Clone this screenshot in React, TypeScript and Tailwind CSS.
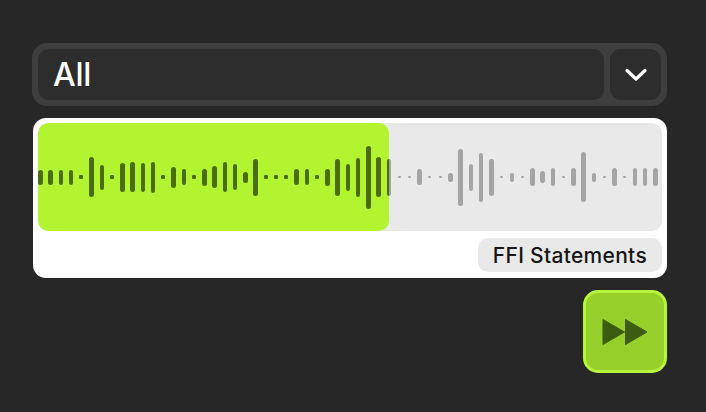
import React from 'react';

const heights = [
  15, 15, 15, 15, 0, 40, 25, 0, 29, 30, 29, 31, 0, 21, 16, 0, 17, 22, 30, 26, 11, 37, 0, 0, 0, 16, 16, 0, 17, 37, 27,
  39, 63, 40, 37, 0, 0, 16, 0, 0, 9, 57, 27, 49, 37, 0, 9, 0, 18, 12, 18, 0, 18, 50, 9, 0, 18, 0, 18, 18, 18,
];

const Wave: React.FC<{ dark?: boolean }> = ({ dark }) => (
  <div className="w-[624px] h-full flex items-center justify-between pr-[4px]">
    {heights.map((h, i) =>
      h === 0 ? (
        <div key={i} className="w-[4.5px] flex justify-center">
          {dark ? (
            <div className="w-[4px] h-[4px] rounded-[1px] bg-[#4a6e0e]" />
          ) : (
            <div className="w-[3px] h-[2px] rounded-full bg-[#a5a5a5]" />
          )}
        </div>
      ) : (
        <div
          key={i}
          className={dark ? 'w-[4.5px] rounded-full bg-[#4a6e0e]' : 'w-[4.5px] rounded-full bg-[#a5a5a5]'}
          style={{ height: h }}
        />
      )
    )}
  </div>
);

const App: React.FC = () => {
  return (
    <div className="w-[706px] h-[412px] bg-[#272727] pt-[43px] pl-[32px] font-['Inter',sans-serif]">
      <div className="w-[635px] flex flex-col">
        <div className="h-[63px] rounded-[15px] bg-[#3e3e3e] p-[6px] flex gap-[6px]">
          <div className="flex-1 rounded-[11px] bg-[#2d2d2d] flex items-center pl-[15px]">
            <span className="text-white text-[32px] font-medium tracking-[-0.3px] leading-none">All</span>
          </div>
          <div className="w-[51px] rounded-[11px] bg-[#2d2d2d] flex items-center justify-center">
            <svg width="24" height="14" viewBox="0 0 24 14" fill="none">
              <path d="M3 2.5 L12 11 L21 2.5" stroke="white" strokeWidth="3.2" strokeLinecap="round" strokeLinejoin="round" />
            </svg>
          </div>
        </div>

        <div className="mt-[12px] ml-[1px] w-[634px] h-[160px] bg-white rounded-[13px] p-[5px] flex flex-col">
          <div className="relative h-[108px] rounded-[10px] bg-[#e9e9e9] overflow-hidden">
            <Wave />
            <div className="absolute left-0 top-0 h-full w-[351px] rounded-[10px] bg-[#b2f430] overflow-hidden">
              <Wave dark />
            </div>
          </div>
          <div className="self-end mt-[7px] h-[34px] px-[15px] rounded-[10px] bg-[#e9e9e9] flex items-center">
            <span className="text-[#161616] text-[21px] font-medium tracking-[0.3px] leading-none">FFI Statements</span>
          </div>
        </div>

        <div className="self-end mt-[12px] w-[84px] h-[83px] rounded-[15px] border-[3px] border-[#b6f53c] bg-[#97cf2b] flex items-center justify-center">
          <svg width="46" height="28" viewBox="0 0 46 28">
            <path d="M1 1.5 L22.5 14 L1 26.5 Z" fill="#3c5c12" stroke="#3c5c12" strokeWidth="1" strokeLinejoin="round" />
            <path d="M23.5 1.5 L45 14 L23.5 26.5 Z" fill="#3c5c12" stroke="#3c5c12" strokeWidth="1" strokeLinejoin="round" />
          </svg>
        </div>
      </div>
    </div>
  );
};

export default App;
